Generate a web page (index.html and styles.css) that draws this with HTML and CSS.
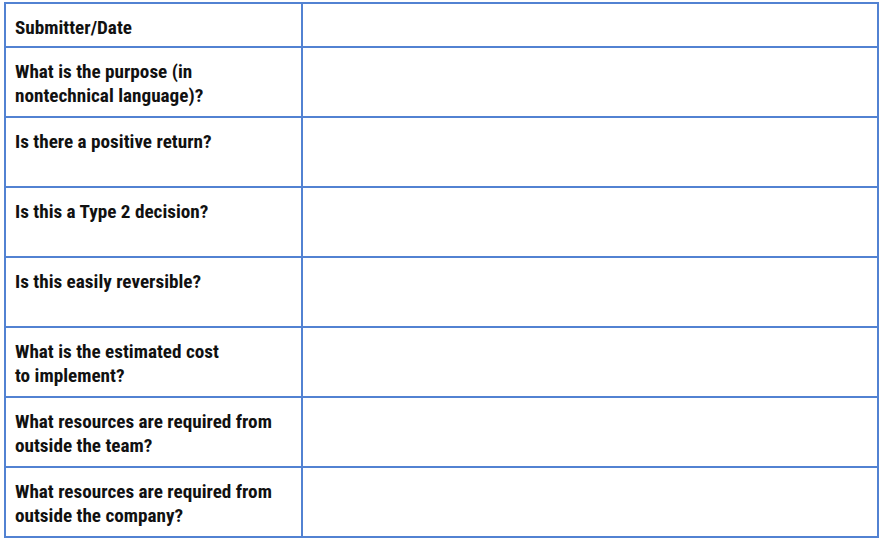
FILE: index.html
```html
<!DOCTYPE html>
<html>
<head>
<meta charset="utf-8">
<link rel="stylesheet" href="styles.css">
</head>
<body>
<div class="sheet">
  <div class="cell label first">Submitter/Date</div><div class="cell first"></div>
  <div class="cell label">What is the purpose (in<br>nontechnical language)?</div><div class="cell"></div>
  <div class="cell label">Is there a positive return?</div><div class="cell"></div>
  <div class="cell label">Is this a Type 2 decision?</div><div class="cell"></div>
  <div class="cell label">Is this easily reversible?</div><div class="cell"></div>
  <div class="cell label">What is the estimated cost<br>to implement?</div><div class="cell"></div>
  <div class="cell label">What resources are required from<br>outside the team?</div><div class="cell"></div>
  <div class="cell label">What resources are required from<br>outside the company?</div><div class="cell"></div>
</div>
</body>
</html>
```

FILE: styles.css
```css
html, body {
  margin: 0;
  padding: 0;
  background: #ffffff;
}
body {
  padding: 2px 0 0 4px;
}
.sheet {
  display: grid;
  grid-template-columns: 297px 576px;
  grid-template-rows: 44px repeat(7, 70px);
  width: 873px;
  border-top: 2px solid #5282d2;
  border-left: 2px solid #5282d2;
}
.cell {
  border-right: 2px solid #5282d2;
  border-bottom: 2px solid #5282d2;
  box-sizing: border-box;
}
.label {
  font-family: "Roboto Condensed", "DejaVu Sans Condensed", Roboto, sans-serif;
  font-weight: 700;
  font-size: 19.2px;
  line-height: 24px;
  color: #111111;
  padding: 12px 0 0 9px;
}
.label.first {
  padding-top: 12px;
}
```
